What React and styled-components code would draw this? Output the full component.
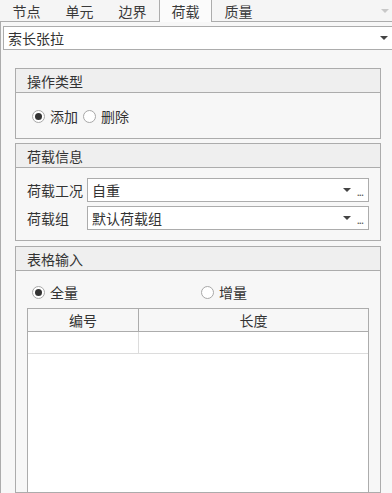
import React, { useState } from 'react'
import styled, { createGlobalStyle } from 'styled-components'

const GlobalStyle = createGlobalStyle`
  html, body {
    margin: 0;
    padding: 0;
    background: #f7f7f7;
  }
  * { box-sizing: border-box; }
`

const Page = styled.div`
  width: 392px;
  height: 493px;
  overflow: hidden;
  background: #f7f7f7;
  color: #333;
  font-family: "Noto Sans CJK SC", "Noto Sans", sans-serif;
  font-size: 14px;
  display: flex;
  flex-direction: column;
`

// tab strip along the top
const TabBar = styled.div`
  height: 22px;
  flex: none;
  display: flex;
  align-items: stretch;
  border-bottom: 1px solid #acacac;
  background: #f5f5f5;
`

const Tab = styled.div`
  width: 53px;
  display: flex;
  justify-content: center;
  align-items: center;
  line-height: 20px;
  color: #3a3a3a;
  background: ${p => (p.active ? '#fbfbfb' : 'transparent')};
  border: 1px solid ${p => (p.active ? '#acacac' : 'transparent')};
  border-top: none;
  border-bottom: none;
  margin-bottom: ${p => (p.active ? '-1px' : '0')};
  cursor: pointer;
`

const OverflowArrow = styled.div`
  margin-left: auto;
  margin-right: 3px;
  align-self: center;
  width: 0;
  height: 0;
  border-left: 4px solid transparent;
  border-right: 4px solid transparent;
  border-top: 4px solid #c8c8c8;
`

const Content = styled.div`
  flex: 1;
  border-left: 1px solid #acacac;
  padding-top: 4px;
  display: flex;
  flex-direction: column;
  min-height: 0;
`

const Combo = styled.div`
  height: 24px;
  background: #fff;
  border: 1px solid #acacac;
  display: flex;
  align-items: center;
  padding-left: 4px;
  padding-right: 5px;
  line-height: 20px;
`

const TopCombo = styled(Combo)`
  margin-left: 2px;
  margin-right: -2px;
  flex: none;
`

const ComboText = styled.span`
  flex: 1;
`

const Arrow = styled.span`
  width: 0;
  height: 0;
  border-left: 4px solid transparent;
  border-right: 4px solid transparent;
  border-top: 4px solid #444;
`

const Ellipsis = styled.span`
  margin-left: 6px;
  font-size: 11px;
  line-height: 11px;
  align-self: flex-end;
  padding-bottom: 4px;
  color: #555;
  letter-spacing: -1px;
`

const Group = styled.div`
  margin-left: 14px;
  width: 366px;
  border: 1px solid #acacac;
  background: #f7f7f7;
  margin-top: ${p => p.gap}px;
  flex: ${p => (p.grow ? 1 : 'none')};
  display: flex;
  flex-direction: column;
`

const GroupHeader = styled.div`
  height: 24px;
  background: #efefef;
  border-bottom: 1px solid #acacac;
  padding-left: 11px;
  display: flex;
  align-items: center;
`

const GroupBody = styled.div`
  padding: ${p => p.pad};
  display: flex;
  flex-direction: column;
  flex: 1;
`

const RadioRow = styled.div`
  display: flex;
  align-items: center;
  height: 22px;
  margin-left: ${p => p.indent || 0}px;
`

const RadioLabel = styled.label`
  display: flex;
  align-items: center;
  gap: 5px;
  width: ${p => (p.width ? `${p.width}px` : 'auto')};
  margin-right: ${p => p.space || 0}px;
  cursor: pointer;
`

const RadioCircle = styled.span`
  width: 13px;
  height: 13px;
  border-radius: 50%;
  border: 1px solid #a8a8a8;
  background: #fff;
  display: flex;
  align-items: center;
  justify-content: center;

  &::after {
    content: '';
    width: 7px;
    height: 7px;
    border-radius: 50%;
    background: ${p => (p.checked ? '#333' : 'transparent')};
  }
`

function Radio({ label, checked, onClick, width, space }) {
  return (
    <RadioLabel width={width} space={space} onClick={onClick}>
      <RadioCircle checked={checked} />
      {label}
    </RadioLabel>
  )
}

const FieldRow = styled.div`
  display: flex;
  align-items: center;
  margin-bottom: ${p => p.gap || 0}px;
`

const FieldLabel = styled.span`
  width: 60px;
`

const FieldCombo = styled(Combo)`
  flex: 1;
`

function ComboBox({ value }) {
  return (
    <FieldCombo>
      <ComboText>{value}</ComboText>
      <Arrow />
      <Ellipsis>...</Ellipsis>
    </FieldCombo>
  )
}

const Table = styled.div`
  margin-top: 5px;
  flex: 1;
  background: #fff;
  border: 1px solid #acacac;
  border-bottom: none;
  display: grid;
  grid-template-columns: 110px 1fr;
  grid-template-rows: 23px 22px 1fr;
`

const HeadCell = styled.div`
  background: #f7f7f7;
  border-bottom: 1px solid #acacac;
  border-left: ${p => (p.first ? 'none' : '1px solid #acacac')};
  display: flex;
  align-items: center;
  justify-content: center;
`

const Cell = styled.div`
  background: #fff;
  border-bottom: 1px solid #dcdcdc;
  border-left: ${p => (p.first ? 'none' : '1px solid #dcdcdc')};
`

const tabs = ['节点', '单元', '边界', '荷载', '质量']

export default function App() {
  const [tab, setTab] = useState(3)
  const [op, setOp] = useState('add')
  const [mode, setMode] = useState('all')

  return (
    <Page>
      <GlobalStyle />
      <TabBar>
        {tabs.map((t, i) => (
          <Tab key={t} active={i === tab} onClick={() => setTab(i)}>{t}</Tab>
        ))}
        <OverflowArrow />
      </TabBar>
      <Content>
        <TopCombo>
          <ComboText>索长张拉</ComboText>
          <Arrow />
        </TopCombo>

        <Group gap={18}>
          <GroupHeader>操作类型</GroupHeader>
          <GroupBody pad="12px 0 11px 16px">
            <RadioRow>
              <Radio label="添加" checked={op === 'add'} onClick={() => setOp('add')} space={5} />
              <Radio label="删除" checked={op === 'del'} onClick={() => setOp('del')} />
            </RadioRow>
          </GroupBody>
        </Group>

        <Group gap={4}>
          <GroupHeader>荷载信息</GroupHeader>
          <GroupBody pad="10px 11px 10px 11px">
            <FieldRow gap={4}>
              <FieldLabel>荷载工况</FieldLabel>
              <ComboBox value="自重" />
            </FieldRow>
            <FieldRow>
              <FieldLabel>荷载组</FieldLabel>
              <ComboBox value="默认荷载组" />
            </FieldRow>
          </GroupBody>
        </Group>

        <Group gap={5} grow>
          <GroupHeader>表格输入</GroupHeader>
          <GroupBody pad="10px 11px 0 11px">
            <RadioRow indent={5}>
              <Radio label="全量" width={169} checked={mode === 'all'} onClick={() => setMode('all')} />
              <Radio label="增量" checked={mode === 'inc'} onClick={() => setMode('inc')} />
            </RadioRow>
            <Table>
              <HeadCell first>编号</HeadCell>
              <HeadCell>长度</HeadCell>
              <Cell first />
              <Cell />
            </Table>
          </GroupBody>
        </Group>
      </Content>
    </Page>
  )
}
